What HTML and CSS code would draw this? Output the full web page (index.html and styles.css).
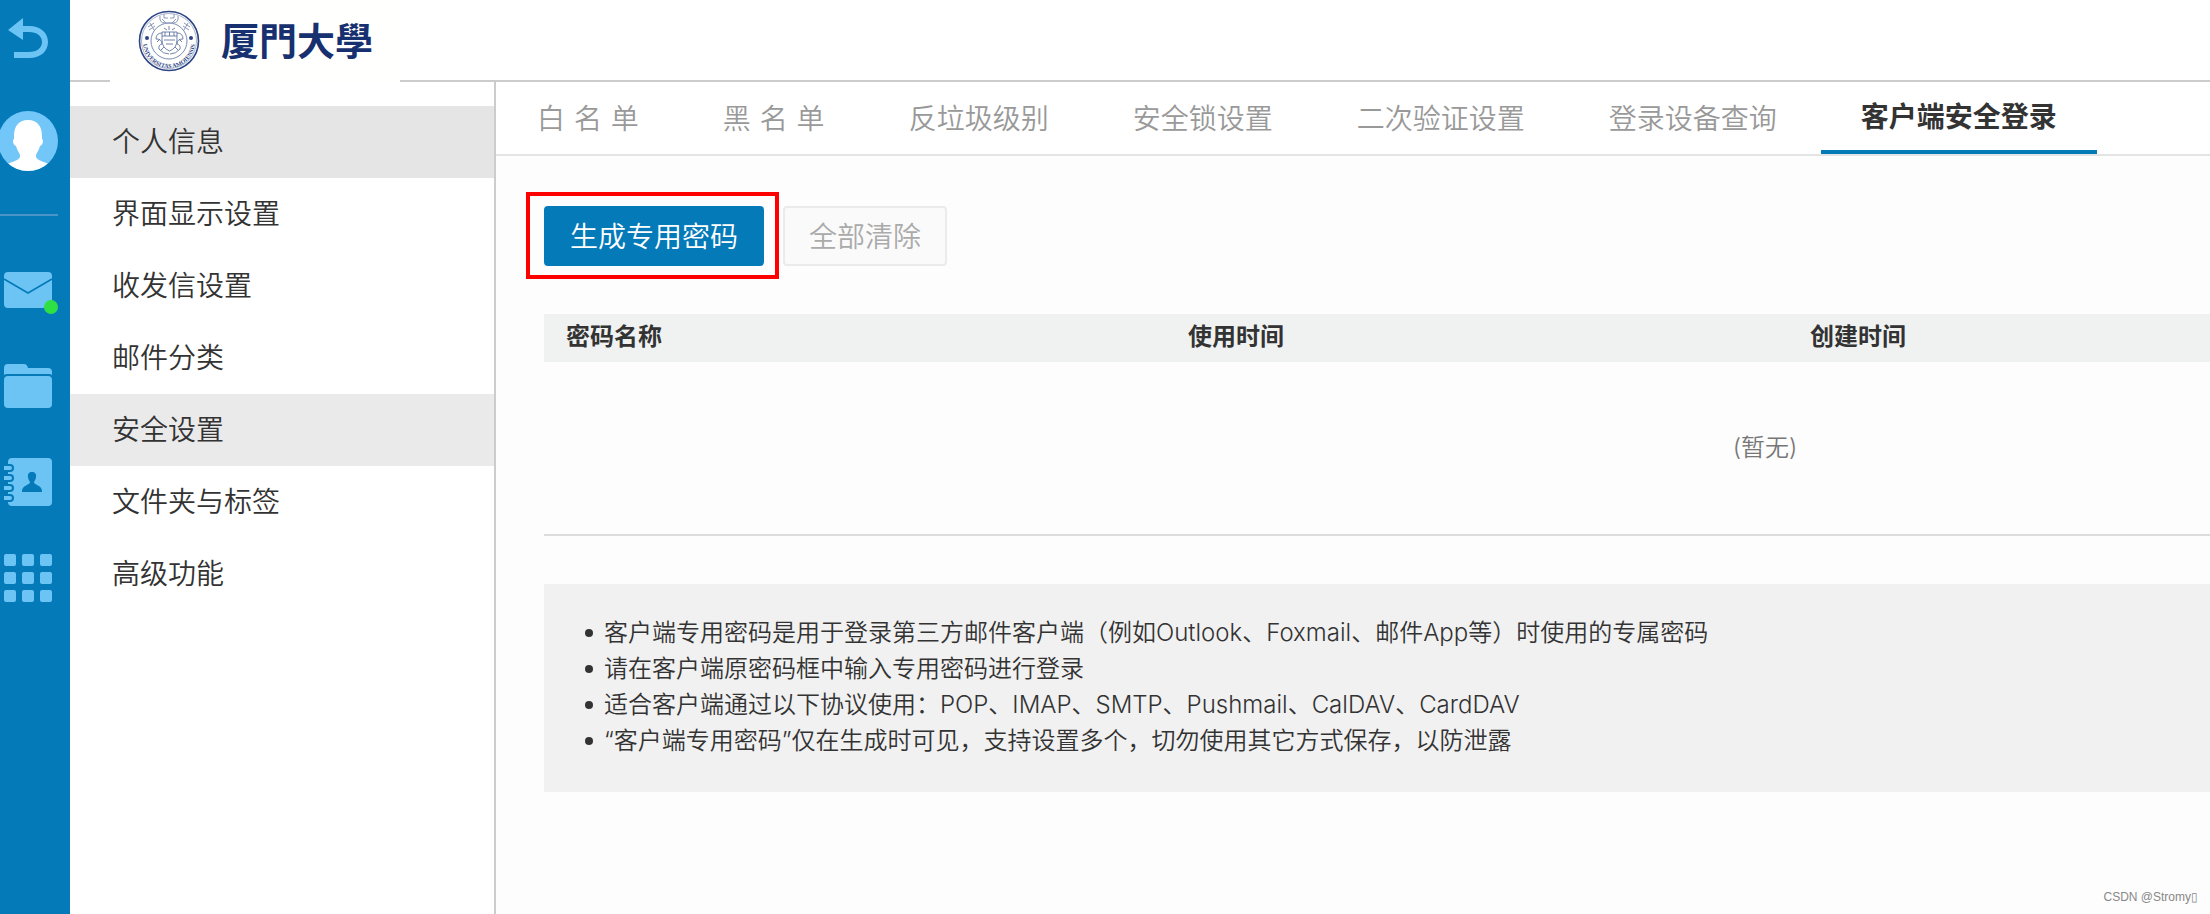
FILE: index.html
```html
<!DOCTYPE html>
<html lang="zh-CN">
<head>
  <meta charset="UTF-8">
  <meta name="viewport" content="width=device-width, initial-scale=1">
  <title>客户端安全登录</title>
  <link rel="stylesheet" href="styles.css">
</head>
<body>

<nav class="rail">
  <a href="#" class="rail-back" title="返回">
    <svg width="48" height="44" viewBox="0 0 48 44">
      <path d="M4 14 19 2v8h6c12 0 19 7 19 16s-7 16-19 16H10v-6h15c8 0 13-4 13-10s-5-10-13-10h-6v8z" fill="#6cc4f5"/>
    </svg>
  </a>
  <a href="#" class="rail-avatar" title="个人信息">
    <svg width="60" height="60" viewBox="0 0 60 60">
      <defs><clipPath id="round"><circle cx="30" cy="30" r="30"/></clipPath></defs>
      <g clip-path="url(#round)">
        <rect width="60" height="60" fill="#72c6f8"/>
        <path d="M30 9c-10 0-14 7-14 16v3c-2 1-1 6 2 7 1 4 3 6 4 9 1 5-6 6-13 9l6 7h30l6-7c-7-3-14-4-13-9 1-3 3-5 4-9 3-1 4-6 2-7v-3c0-9-4-16-14-16z" fill="#fff"/>
      </g>
    </svg>
  </a>
  <hr class="rail-line">
  <a href="#" class="rail-icon" title="邮件">
    <svg width="56" height="44" viewBox="0 0 56 44">
      <rect y="0" width="48" height="36" rx="4" fill="#6cc4f5"/>
      <path d="M0 7 24 21 48 7" fill="none" stroke="#047ab9" stroke-width="1.6"/>
      <circle cx="47" cy="35" r="7" fill="#2ee043"/>
    </svg>
  </a>
  <a href="#" class="rail-icon" title="文件夹">
    <svg width="48" height="44" viewBox="0 0 48 44">
      <path d="M0 10V4a4 4 0 0 1 4-4h16q3 0 4 4h20a4 4 0 0 1 4 4v3q-1-1-3-1H3q-2 0-3 1z" fill="#6cc4f5"/>
      <rect y="12" width="48" height="32" rx="4" fill="#6cc4f5"/>
    </svg>
  </a>
  <a href="#" class="rail-icon rail-contacts" title="通讯录">
    <svg width="48" height="48" viewBox="0 0 48 48">
      <rect x="4" width="44" height="48" rx="4" fill="#6cc4f5"/>
      <g fill="#6cc4f5" stroke="#047ab9" stroke-width="2">
        <rect x="-3" y="7" width="12" height="6" rx="3"/>
        <rect x="-3" y="17" width="12" height="6" rx="3"/>
        <rect x="-3" y="27" width="12" height="6" rx="3"/>
        <rect x="-3" y="37" width="12" height="6" rx="3"/>
      </g>
      <path d="M28 14c-3 0-4.500 2-4 5 .2 2 1 3.500 2 5 .5 3-8 3-8 9v1h20v-1c0-6-8.500-6-8-9 1-1.500 1.800-3 2-5 .5-3-1-5-4-5z" fill="#047ab9"/>
    </svg>
  </a>
  <a href="#" class="rail-icon" title="应用">
    <svg width="48" height="48" viewBox="0 0 48 48" fill="#6cc4f5">
      <rect width="12" height="12" rx="2"/><rect x="18" width="12" height="12" rx="2"/><rect x="36" width="12" height="12" rx="2"/>
      <rect y="18" width="12" height="12" rx="2"/><rect x="18" y="18" width="12" height="12" rx="2"/><rect x="36" y="18" width="12" height="12" rx="2"/>
      <rect y="36" width="12" height="12" rx="2"/><rect x="18" y="36" width="12" height="12" rx="2"/><rect x="36" y="36" width="12" height="12" rx="2"/>
    </svg>
  </a>
</nav>

<div class="page">
  <header class="header">
    <a href="#" class="logo">
      <svg width="62" height="62" viewBox="0 0 62 62" fill="none" stroke="#4a5f96">
        <defs><path id="ring" d="M5 32a26 26 0 0 0 52 0"/></defs>
        <circle cx="31" cy="31" r="29.500" stroke="#2d4585" stroke-width="1.600"/>
        <circle cx="31" cy="31" r="27.500" stroke="#8593ba" stroke-width=".7"/>
        <circle cx="31" cy="31" r="18" stroke="#7c8bb5"/>
        <circle cx="9" cy="28" r="2" fill="#2d4585" stroke="none"/>
        <circle cx="53" cy="28" r="2" fill="#2d4585" stroke="none"/>
        <!-- seal characters along the top -->
        <g stroke="#8b98bd" stroke-width="1">
          <path d="M10 17l6-4M11 20l6-4M12 13l4 7M22 6q-1 7 5 7h8q6 0 5-7M26 4v4h4M36 4v4h-4M24 9l4 4M38 9l-4 4M46 13l6 4M45 16l6 4M50 13l-4 7"/>
        </g>
        <!-- shield and stars -->
        <g stroke="#6375a5" stroke-width=".9">
          <path d="M24 22h15v8q0 8-7.500 11Q24 38 24 30zM24 26h15M27 22v4M31.500 22v4M36 22v4M26 30h11M28 34h7"/>
          <path d="M24 23q-6 0-6 6 6 0 6 5-4 1-3 5 4 5 10 5M39 23q6 0 6 6-6 0-6 5 4 1 3 5-4 5-10 5"/>
          <path d="M26 18l3 2M31 16v4M37 18l-3 2M22 29l-3 3M41 29l3 3M26 37l-3 3M37 37l3 3"/>
        </g>
        <text class="seal"><textPath href="#ring" startOffset="50%">UNIVERSITAS AMOIENSIS</textPath></text>
      </svg>
      <span class="logo-name">厦門大學</span>
    </a>
  </header>

  <div class="body">
    <aside class="sidebar">
      <a href="#" class="hover">个人信息</a>
      <a href="#">界面显示设置</a>
      <a href="#">收发信设置</a>
      <a href="#">邮件分类</a>
      <a href="#" class="current">安全设置</a>
      <a href="#">文件夹与标签</a>
      <a href="#">高级功能</a>
    </aside>

    <main class="main">
      <nav class="tabs">
        <a href="#">白 名 单</a>
        <a href="#">黑 名 单</a>
        <a href="#">反垃圾级别</a>
        <a href="#">安全锁设置</a>
        <a href="#">二次验证设置</a>
        <a href="#">登录设备查询</a>
        <a href="#" class="active">客户端安全登录</a>
      </nav>

      <section class="content">
        <div class="toolbar">
          <div class="mark"><button type="button" class="btn btn-primary">生成专用密码</button></div>
          <button type="button" class="btn" disabled>全部清除</button>
        </div>

        <table class="list">
          <thead>
            <tr><th>密码名称</th><th>使用时间</th><th>创建时间</th><th></th></tr>
          </thead>
          <tbody>
            <tr><td colspan="4">(暂无)</td></tr>
          </tbody>
        </table>

        <ul class="tips">
          <li>客户端专用密码是用于登录第三方邮件客户端（例如Outlook、Foxmail、邮件App等）时使用的专属密码</li>
          <li>请在客户端原密码框中输入专用密码进行登录</li>
          <li>适合客户端通过以下协议使用：POP、IMAP、SMTP、Pushmail、CalDAV、CardDAV</li>
          <li>“客户端专用密码”仅在生成时可见，支持设置多个，切勿使用其它方式保存，以防泄露</li>
        </ul>
      </section>
    </main>
  </div>
</div>

<div class="watermark">CSDN @Stromy▯</div>

</body>
</html>
```
FILE: styles.css
```css
* {
  box-sizing: border-box;
}

body {
  margin: 0;
  min-height: 100vh;
  display: flex;
  overflow: hidden;
  background: #fff;
  color: #333;
  font-family: Inter, "Noto Sans CJK SC", sans-serif;
  font-size: 28px;
  font-weight: 350;
}

a {
  color: inherit;
  text-decoration: none;
}

svg {
  display: block;
}

/* left icon rail */
.rail {
  flex: 0 0 70px;
  background: #047ab9;
  overflow: hidden;
}

.rail-back {
  display: block;
  padding: 16px 0 0 4px;
}

.rail-avatar {
  display: block;
  margin: 51px 0 0 -2px;
}

.rail-line {
  width: 58px;
  height: 2px;
  margin: 43px 0 56px;
  border: 0;
  background: #4a94c8;
}

.rail-icon {
  display: block;
  margin: 0 0 48px 4px;
}

.rail-contacts {
  margin-top: 50px;
}

.page {
  flex: 1;
  min-width: 0;
  display: flex;
  flex-direction: column;
}

.header {
  height: 82px;
  padding-left: 40px;
  border-bottom: 2px solid #ccc;
}

.logo {
  display: inline-flex;
  align-items: center;
  gap: 21px;
  width: 290px;
  height: 82px;
  padding: 0 0 0 28px;
  background: #fffffd;
}

.logo-name {
  color: #17306f;
  font-family: "Noto Sans CJK TC", "Noto Sans CJK SC", sans-serif;
  font-size: 38px;
  font-weight: 700;
  line-height: 48px;
  padding-bottom: 4px;
}

.seal {
  fill: #2d4585;
  stroke: none;
  font-family: "Liberation Serif", serif;
  font-size: 6px;
  font-weight: 700;
  text-anchor: middle;
}

.body {
  flex: 1;
  display: flex;
}

.sidebar {
  flex: 0 0 426px;
  padding-top: 24px;
  border-right: 2px solid #ccc;
}

.sidebar a {
  display: block;
  padding-left: 42px;
  line-height: 72px;
}

.sidebar .hover {
  background: #e5e5e5;
}

.sidebar .current {
  background: #eaeaea;
}

.main {
  flex: 1;
  min-width: 0;
  overflow: hidden;
  background: #fdfdfd;
}

.tabs {
  display: flex;
  gap: 4px;
  height: 74px;
  padding-left: 1px;
  background: #fff;
  border-bottom: 2px solid #e4e4e4;
  font-family: "DejaVu Sans", "Noto Sans CJK SC", sans-serif;
}

.tabs a {
  padding: 0 40px;
  line-height: 76px;
  color: #999;
  white-space: nowrap;
}

.tabs .active {
  line-height: 72px;
  border-bottom: 4px solid #047ab9;
  color: #333;
  font-weight: 700;
}

.content {
  padding: 36px 0 0 48px;
}

.toolbar {
  display: flex;
  align-items: center;
  gap: 4px;
  margin-left: -18px;
}

.mark {
  padding: 10px 11px 9px 14px;
  border: 4px solid #f00;
}

.btn {
  display: block;
  height: 60px;
  padding: 0 24px 2px;
  border: 2px solid #ebebeb;
  border-radius: 4px;
  background: #fafafa;
  color: #aaa;
  font: inherit;
}

.btn-primary {
  border-color: #047ab9;
  background: #047ab9;
  color: #fff;
}

/* wider than the window, the right part runs off screen */
.list {
  width: calc(100% + 776px);
  margin-top: 35px;
  table-layout: fixed;
  border-collapse: collapse;
  font-size: 24px;
}

.list th {
  width: 622px;
  height: 48px;
  padding: 0 22px 2px;
  background: #f0f2f1;
  text-align: left;
  font-weight: 700;
  line-height: 36px;
}

.list th:last-child {
  width: auto;
}

.list td {
  height: 173px;
  padding: 0 0 6px;
  border-bottom: 2px solid #ddd;
  color: #777;
  text-align: center;
}

.tips {
  margin: 48px 0 0;
  padding: 31px 0 33px 41px;
  background: #f1f1f1;
  font-size: 24px;
  line-height: 36px;
  list-style: none;
}

.tips li {
  display: flex;
  align-items: center;
  gap: 11px;
}

.tips li::before {
  content: "";
  width: 8px;
  height: 8px;
  border-radius: 50%;
  background: #333;
}

.watermark {
  position: absolute;
  right: 12px;
  bottom: 10px;
  color: #888;
  font-family: "Liberation Sans", sans-serif;
  font-size: 12px;
}
```
